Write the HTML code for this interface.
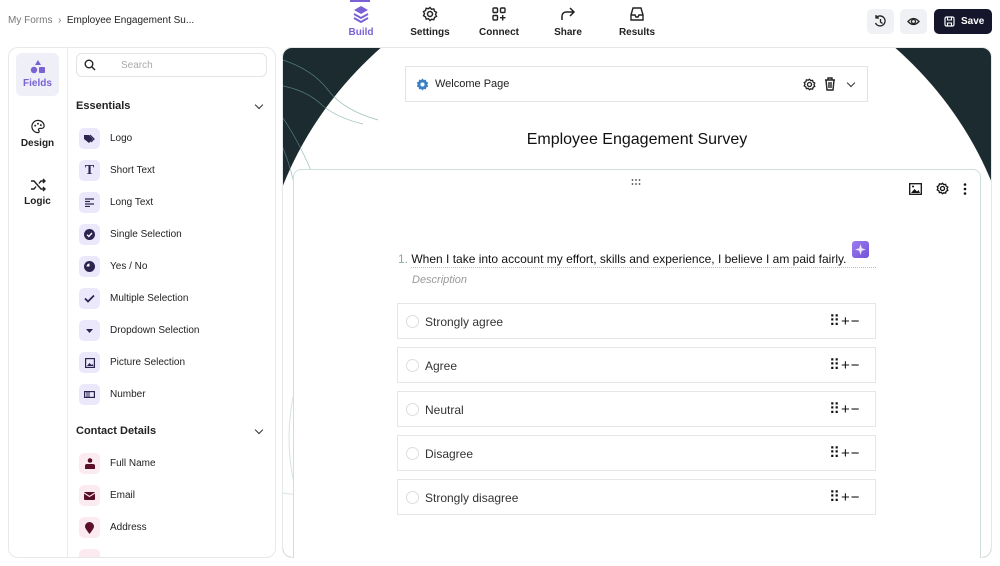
<!DOCTYPE html>
<html><head><meta charset="utf-8">
<style>
*{box-sizing:border-box;margin:0;padding:0}
body{width:1000px;height:566px;overflow:hidden;background:#fff;font-family:"Liberation Sans",sans-serif;color:#1a1a2e;position:relative}
.abs{position:absolute}
.bc{left:8px;top:15px;font-size:10px;color:#777}
.bc b{color:#222;font-weight:normal}
.tab{top:5px;width:60px;text-align:center;font-size:10px;font-weight:bold;color:#222}
.tab svg{display:block;margin:0 auto 4px}
.btn{top:9px;width:27px;height:25px;border-radius:5px;background:#f0f1f4}
.save{left:934px;top:9px;width:58px;height:25px;border-radius:5px;background:#15152b;color:#fff;font-size:10px;font-weight:bold;padding:7px 0 0 27px}
.side{left:8px;top:47px;width:268px;height:511px;border:1px solid #e8e8ec;border-radius:10px}
.navsep{left:67px;top:47px;width:1px;height:511px;background:#ececf0}
.nav{left:16px;width:43px;text-align:center;font-size:10px;font-weight:bold;color:#222}
.search{left:76px;top:53px;width:191px;height:24px;border:1px solid #e3e3e8;border-radius:6px;font-size:10px;color:#aaa;padding:6px 0 0 44px}
.sec{left:76px;font-size:11px;font-weight:bold;color:#222}
.chev{left:256px;width:6px;height:6px;border-right:1.2px solid #333;border-bottom:1.2px solid #333;transform:rotate(45deg)}
.item{left:79px;height:22px;width:190px;font-size:10px;color:#222}
.item .ic{position:absolute;left:0;top:0;width:21px;height:21px;border-radius:5px;background:#ece8fb;display:flex;align-items:center;justify-content:center}
.item .ic.p{background:#fbeaf0}
.item span{position:absolute;left:31px;top:5px}
.canvas{left:282px;top:47px;width:710px;height:511px;border-radius:10px;overflow:hidden;background:#1c2b30;border:1px solid #e4e8e8}
.ell{left:-25px;top:-96px;width:760px;height:726px;border-radius:50%;background:#fff}
.wel{left:405px;top:66px;width:463px;height:36px;border:1px solid #e3e3e6;background:#fff;font-size:11px;color:#222}
.card{left:293px;top:169px;width:688px;height:389px;border:1px solid #cfe0dc;border-bottom:none;border-radius:8px 8px 0 0;background:#fff}
.opt{left:397px;width:479px;height:36px;border:1px solid #e6e6e6;background:#fff;font-size:12px;color:#333}
.opt .r{position:absolute;left:8px;top:11px;width:13px;height:13px;border-radius:50%;border:1px solid #ddd}
.opt .t{position:absolute;left:27px;top:11px}
.opt .c{position:absolute;left:431px;top:8px;font-size:15px;color:#111;letter-spacing:1px}
</style></head><body>
<div class="abs bc">My Forms &nbsp;›&nbsp; <b>Employee Engagement Su...</b></div>

<div class="abs tab" style="left:331px;color:#7a61d6"><svg width="16" height="18" viewBox="0 0 16 18"><path d="M8 1L15 5 8 9 1 5Z" fill="#7a61d6"/><path d="M1 9l7 4 7-4M1 13l7 4 7-4" stroke="#7a61d6" stroke-width="2" fill="none"/></svg>Build</div>
<div class="abs" style="left:350px;top:0;width:20px;height:2px;background:#7a61d6"></div>
<div class="abs tab" style="left:400px"><svg width="16" height="18" viewBox="0 0 16 16"><circle cx="8" cy="8" r="2.5" fill="none" stroke="#222" stroke-width="1.5"/><path d="M8 1.5l1.5 1.8 2.3-.4.7 2.2 2 1.2-1 2 1 2-2 1.2-.7 2.2-2.3-.4L8 14.5l-1.5-1.8-2.3.4-.7-2.2-2-1.2 1-2-1-2 2-1.2.7-2.2 2.3.4z" fill="none" stroke="#222" stroke-width="1.4"/></svg>Settings</div>
<div class="abs tab" style="left:469px"><svg width="16" height="18" viewBox="0 0 16 16"><rect x="2" y="2" width="4.5" height="4.5" rx="1" fill="none" stroke="#222" stroke-width="1.4"/><rect x="9.5" y="2" width="4.5" height="4.5" rx="1" fill="none" stroke="#222" stroke-width="1.4"/><rect x="2" y="9.5" width="4.5" height="4.5" rx="1" fill="none" stroke="#222" stroke-width="1.4"/><path d="M11.7 9v5.5M9 11.7h5.5" stroke="#222" stroke-width="1.4"/></svg>Connect</div>
<div class="abs tab" style="left:538px"><svg width="16" height="18" viewBox="0 0 16 16"><path d="M2 14V10a4 4 0 014-4h8M10 2l4 4-4 4" fill="none" stroke="#222" stroke-width="1.5"/></svg>Share</div>
<div class="abs tab" style="left:607px"><svg width="16" height="18" viewBox="0 0 16 16"><path d="M2 9l2-7h8l2 7v5H2zM2 9h4l1 2h2l1-2h4" fill="none" stroke="#222" stroke-width="1.4"/></svg>Results</div>

<div class="abs btn" style="left:867px"><svg width="27" height="25" viewBox="0 0 27 25"><path d="M9 9a5 5 0 11-.5 5M9 6v3h3M13.5 10v3l2 1.5" fill="none" stroke="#222" stroke-width="1.3"/></svg></div>
<div class="abs btn" style="left:900px"><svg width="27" height="25" viewBox="0 0 27 25"><path d="M8 12.5q5.5-6 11 0q-5.5 6-11 0z" fill="none" stroke="#222" stroke-width="1.3"/><circle cx="13.5" cy="12.5" r="2" fill="none" stroke="#222" stroke-width="1.3"/></svg></div>
<div class="abs save"><svg class="abs" style="left:10px;top:7px" width="11" height="11" viewBox="0 0 11 11"><rect x="1" y="1" width="9" height="9" rx="1.5" fill="none" stroke="#fff" stroke-width="1.2"/><path d="M3.5 1v3h4V1M3.5 10V7h4v3" fill="none" stroke="#fff" stroke-width="1.1"/></svg>Save</div>

<div class="abs side"></div>
<div class="abs navsep"></div>
<div class="abs" style="left:16px;top:53px;width:43px;height:43px;border-radius:6px;background:#efeff8"></div>
<div class="abs nav" style="top:60px;color:#7a61d6"><svg width="16" height="14" viewBox="0 0 16 14" style="display:block;margin:0 auto 4px"><path d="M8 0l3 5H5z" fill="#7a61d6"/><circle cx="4" cy="10" r="3.2" fill="#7a61d6"/><rect x="9" y="7" width="6" height="6" rx="1" fill="#7a61d6"/></svg>Fields</div>
<div class="abs nav" style="top:119px"><svg width="16" height="15" viewBox="0 0 16 16" style="display:block;margin:0 auto 4px"><path d="M8 1.5a6.5 6.5 0 100 13c1.5 0 1.5-1.5.8-2.3-.8-.9 0-2.2 1.2-2.2h2a2.5 2.5 0 002.5-2.5C14.5 4 11.5 1.5 8 1.5z" fill="none" stroke="#222" stroke-width="1.3"/><circle cx="5" cy="7" r="1" fill="#222"/><circle cx="8" cy="5" r="1" fill="#222"/><circle cx="11" cy="6.5" r="1" fill="#222"/></svg>Design</div>
<div class="abs nav" style="top:178px"><svg width="16" height="14" viewBox="0 0 16 14" style="display:block;margin:0 auto 4px"><path d="M1 3h3l7 8h4M1 11h3l2-2.5M9 5.5L11 3h4M13 1l2 2-2 2M13 9l2 2-2 2" fill="none" stroke="#222" stroke-width="1.4"/></svg>Logic</div>

<div class="abs search"><svg class="abs" style="left:7px;top:5px" width="12" height="12" viewBox="0 0 12 12"><circle cx="5" cy="5" r="3.8" fill="none" stroke="#222" stroke-width="1.4"/><path d="M8 8l3 3" stroke="#222" stroke-width="1.4"/></svg>Search</div>
<div class="abs sec" style="top:100px">Essentials</div>
<div class="abs chev" style="top:102px"></div>

<div class="abs item" style="top:128px"><div class="ic"><svg width="11" height="10" viewBox="0 0 11 10"><path d="M0 1h5l4 4-4 4-5-4z" fill="#2d2450"/><path d="M6 1l4 4-3 3" fill="none" stroke="#2d2450" stroke-width="1.2"/></svg></div><span>Logo</span></div>
<div class="abs item" style="top:160px"><div class="ic" style="font-family:'Liberation Serif',serif;font-size:14px;font-weight:bold;color:#2d2450">T</div><span>Short Text</span></div>
<div class="abs item" style="top:192px"><div class="ic"><svg width="10" height="9" viewBox="0 0 10 9"><path d="M0 1h9M0 3.5h5M0 6h9M0 8.5h5" stroke="#2d2450" stroke-width="1.2"/></svg></div><span>Long Text</span></div>
<div class="abs item" style="top:224px"><div class="ic"><svg width="11" height="11" viewBox="0 0 11 11"><circle cx="5.5" cy="5.5" r="5.5" fill="#2d2450"/><path d="M3 5.7l1.8 1.8L8 4" fill="none" stroke="#fff" stroke-width="1.3"/></svg></div><span>Single Selection</span></div>
<div class="abs item" style="top:256px"><div class="ic"><svg width="11" height="11" viewBox="0 0 11 11"><circle cx="5.5" cy="5.5" r="5.5" fill="#2d2450"/><path d="M5.5 2.5A3 3 0 002.5 5.5h3z" fill="#fff"/></svg></div><span>Yes / No</span></div>
<div class="abs item" style="top:288px"><div class="ic"><svg width="11" height="9" viewBox="0 0 11 9"><path d="M1 4.5l3 3L10 1.5" fill="none" stroke="#2d2450" stroke-width="1.8"/></svg></div><span>Multiple Selection</span></div>
<div class="abs item" style="top:320px"><div class="ic"><svg width="7" height="4" viewBox="0 0 7 4"><path d="M0 0h7L3.5 4z" fill="#2d2450"/></svg></div><span>Dropdown Selection</span></div>
<div class="abs item" style="top:352px"><div class="ic"><svg width="10" height="10" viewBox="0 0 10 10"><rect x=".6" y=".6" width="8.8" height="8.8" fill="none" stroke="#2d2450" stroke-width="1.2"/><path d="M2 8l2.5-3 2 2 1-1L8.5 8z" fill="#2d2450"/></svg></div><span>Picture Selection</span></div>
<div class="abs item" style="top:384px"><div class="ic"><svg width="11" height="7" viewBox="0 0 11 7"><rect x=".6" y=".6" width="9.8" height="5.8" fill="none" stroke="#2d2450" stroke-width="1.2"/><path d="M3 1v5M5 1v5" stroke="#2d2450"/></svg></div><span>Number</span></div>

<div class="abs sec" style="top:425px">Contact Details</div>
<div class="abs chev" style="top:427px"></div>
<div class="abs item" style="top:453px"><div class="ic p"><svg width="10" height="11" viewBox="0 0 10 11"><circle cx="5" cy="2.5" r="2.3" fill="#5a0f2a"/><path d="M0 11V8q0-2 2-2h6q2 0 2 2v3z" fill="#5a0f2a"/></svg></div><span>Full Name</span></div>
<div class="abs item" style="top:485px"><div class="ic p"><svg width="11" height="8" viewBox="0 0 11 8"><rect width="11" height="8" rx="1" fill="#5a0f2a"/><path d="M0 1l5.5 3.5L11 1" fill="none" stroke="#fbeaf0" stroke-width="1.1"/></svg></div><span>Email</span></div>
<div class="abs item" style="top:517px"><div class="ic p"><svg width="9" height="12" viewBox="0 0 9 12"><path d="M4.5 12C1.5 8 0 6 0 4.5a4.5 4.5 0 019 0C9 6 7.5 8 4.5 12z" fill="#5a0f2a"/></svg></div><span>Address</span></div>
<div class="abs" style="left:79px;top:549px;width:21px;height:8px;border-radius:5px 5px 0 0;background:#fbeaf0"></div>

<div class="abs canvas"><div class="abs ell"></div><div class="abs" style="left:0;top:160px;width:710px;height:360px;background:#fff"></div>
<svg class="abs" style="left:0;top:0" width="120" height="460" viewBox="0 0 120 460"><path d="M0 12q30 10 45 30q15 20 50 30M0 38q25 5 40 20q15 12 40 18M0 70q20 30 35 70M0 100q12 30 15 60" fill="none" stroke="#6fa39a" stroke-width=".7" opacity=".7"/><path d="M12 340q-12 50 0 100M0 445q20 5 35-10" fill="none" stroke="#d5e4e0" stroke-width="1"/></svg>
</div>

<div class="abs wel"><svg class="abs" style="left:10px;top:11px" width="13" height="13" viewBox="0 0 16 16"><path d="M8 .5l1.6 2 2.5-.5.6 2.4 2.3 1.2-1 2.4 1 2.4-2.3 1.2-.6 2.4-2.5-.5L8 15.5l-1.6-2-2.5.5-.6-2.4-2.3-1.2 1-2.4-1-2.4 2.3-1.2.6-2.4 2.5.5z" fill="#3b82c4"/><circle cx="8" cy="8" r="2.5" fill="#fff"/></svg><span class="abs" style="left:29px;top:11px">Welcome Page</span>
<svg class="abs" style="left:397px;top:11px" width="13" height="13" viewBox="0 0 16 16"><circle cx="8" cy="8" r="2.5" fill="none" stroke="#222" stroke-width="1.6"/><path d="M8 1.5l1.5 1.8 2.3-.4.7 2.2 2 1.2-1 2 1 2-2 1.2-.7 2.2-2.3-.4L8 14.5l-1.5-1.8-2.3.4-.7-2.2-2-1.2 1-2-1-2 2-1.2.7-2.2 2.3.4z" fill="none" stroke="#222" stroke-width="1.6"/></svg>
<svg class="abs" style="left:418px;top:10px" width="12" height="14" viewBox="0 0 12 14"><path d="M1 3h10M4 3V1h4v2M2 3l1 10h6l1-10M5 5v6M7 5v6" fill="none" stroke="#222" stroke-width="1.4"/></svg>
<div class="abs" style="left:442px;top:13px;width:6px;height:6px;border-right:1.2px solid #333;border-bottom:1.2px solid #333;transform:rotate(45deg)"></div></div>

<div class="abs" style="left:282px;top:131px;width:710px;text-align:center;font-size:16px;color:#111">Employee Engagement Survey</div>

<div class="abs card"></div>
<svg class="abs" style="left:631px;top:179px" width="10" height="6" viewBox="0 0 10 6"><g fill="#444"><circle cx="1.5" cy="1" r=".9"/><circle cx="5" cy="1" r=".9"/><circle cx="8.5" cy="1" r=".9"/><circle cx="1.5" cy="5" r=".9"/><circle cx="5" cy="5" r=".9"/><circle cx="8.5" cy="5" r=".9"/></g></svg>
<svg class="abs" style="left:909px;top:183px" width="13" height="12" viewBox="0 0 13 12"><rect x=".7" y=".7" width="11.6" height="10.6" fill="none" stroke="#111" stroke-width="1.3"/><path d="M2 10l3.5-4 2.5 2.5 1.5-1.5L11 10z" fill="#111"/><circle cx="4" cy="3.5" r="1" fill="#111"/></svg>
<svg class="abs" style="left:936px;top:182px" width="13" height="13" viewBox="0 0 16 16"><circle cx="8" cy="8" r="2.5" fill="none" stroke="#111" stroke-width="1.6"/><path d="M8 1.5l1.5 1.8 2.3-.4.7 2.2 2 1.2-1 2 1 2-2 1.2-.7 2.2-2.3-.4L8 14.5l-1.5-1.8-2.3.4-.7-2.2-2-1.2 1-2-1-2 2-1.2.7-2.2 2.3.4z" fill="none" stroke="#111" stroke-width="1.6"/></svg>
<svg class="abs" style="left:963px;top:183px" width="4" height="12" viewBox="0 0 4 12"><circle cx="2" cy="1.5" r="1.3" fill="#111"/><circle cx="2" cy="6" r="1.3" fill="#111"/><circle cx="2" cy="10.5" r="1.3" fill="#111"/></svg>

<div class="abs" style="left:852px;top:241px;width:17px;height:17px;border-radius:3px;background:linear-gradient(135deg,#9b7cf0,#7152d8)"><svg width="17" height="17" viewBox="0 0 17 17"><path d="M8.5 3l1.3 4.2 4.2 1.3-4.2 1.3-1.3 4.2-1.3-4.2L3 8.5l4.2-1.3z" fill="#fff" opacity=".85"/></svg></div>
<div class="abs" style="left:398px;top:252px;font-size:12px;color:#111"><span style="color:#8aa;">1.</span> When I take into account my effort, skills and experience, I believe I am paid fairly.</div>
<div class="abs" style="left:411px;top:267px;width:465px;border-top:1px dotted #bbb"></div>
<div class="abs" style="left:412px;top:274px;font-size:11px;font-style:italic;color:#999">Description</div>

<div class="abs opt" style="top:303px"><div class="r"></div><div class="t">Strongly agree</div><div class="c">⠿+−</div></div>
<div class="abs opt" style="top:347px"><div class="r"></div><div class="t">Agree</div><div class="c">⠿+−</div></div>
<div class="abs opt" style="top:391px"><div class="r"></div><div class="t">Neutral</div><div class="c">⠿+−</div></div>
<div class="abs opt" style="top:435px"><div class="r"></div><div class="t">Disagree</div><div class="c">⠿+−</div></div>
<div class="abs opt" style="top:479px"><div class="r"></div><div class="t">Strongly disagree</div><div class="c">⠿+−</div></div>
</body></html>
